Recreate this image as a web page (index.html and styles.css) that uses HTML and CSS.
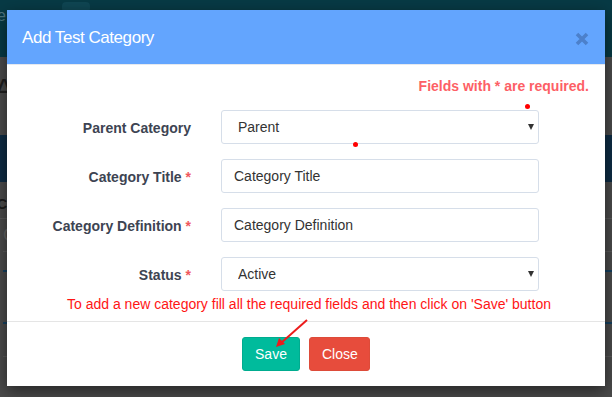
FILE: index.html
```html
<!DOCTYPE html>
<html lang="en">
<head>
  <meta charset="UTF-8">
  <title>Add Test Category</title>
  <link rel="stylesheet" href="styles.css">
</head>
<body>
  <div class="page">
    <header class="topbar">
      <span class="brand">e</span>
      <span class="top-pill"></span>
    </header>
    <div class="page-body">
      <h1 class="page-title">A</h1>
      <div class="navy-band"></div>
      <div class="list-head">Ca</div>
      <div class="list-row">C</div>
      <div class="list-row blue"></div>
      <div class="list-row tall blue"></div>
      <div class="list-row"></div>
    </div>
  </div>

  <div class="modal">
    <div class="modal-header">
      <h4 class="modal-title">Add Test Category</h4>
      <svg class="close-icon" width="14" height="14" viewBox="0 0 14 14">
        <path d="M2 2 L12 12 M12 2 L2 12" stroke="#4c80cb" stroke-width="3.6" stroke-linecap="butt"/>
      </svg>
    </div>

    <div class="modal-body">
      <p class="required-note">Fields with * are required.</p>

      <form class="form-grid">
        <label class="form-label">Parent Category</label>
        <div class="select-wrap">
          <select class="form-control select">
            <option>Parent</option>
          </select>
        </div>

        <label class="form-label">Category Title <span class="star">*</span></label>
        <input class="form-control" type="text" value="Category Title">

        <label class="form-label">Category Definition <span class="star">*</span></label>
        <input class="form-control" type="text" value="Category Definition">

        <label class="form-label">Status <span class="star">*</span></label>
        <div class="select-wrap">
          <select class="form-control select">
            <option>Active</option>
          </select>
        </div>
      </form>

      <p class="help-note">To add a new category fill all the required fields and then click on 'Save' button</p>
    </div>

    <div class="modal-footer">
      <button class="btn btn-save">Save</button>
      <button class="btn btn-close">Close</button>
    </div>

    <!-- annotation marks -->
    <span class="dot dot-1"></span>
    <span class="dot dot-2"></span>
    <svg class="arrow" width="40" height="34" viewBox="0 0 40 34">
      <line x1="37" y1="1" x2="11" y2="24" stroke="#ec1c1c" stroke-width="2"/>
      <polygon points="6,28 9,19 15,25" fill="#ec1c1c"/>
    </svg>
  </div>
</body>
</html>
```

FILE: styles.css
```css
* {
  box-sizing: border-box;
  margin: 0;
  padding: 0;
}

body {
  font-family: "Liberation Sans", Arial, sans-serif;
  font-size: 14px;
  line-height: 20px;
  background: #4b4b4b;
  width: 612px;
  height: 397px;
  overflow: hidden;
  position: relative;
}

/* page behind the dialog (already dimmed) */
.topbar {
  height: 57px;
  background: #073a45;
  position: relative;
}

.brand {
  position: absolute;
  left: -3px;
  top: 6px;
  font-size: 16px;
  color: #4e7580;
}

.top-pill {
  position: absolute;
  left: 62px;
  top: 2px;
  width: 28px;
  height: 10px;
  border-radius: 4px;
  background: #0f4653;
}

.page-body {
  background: #4b4b4b;
}

.page-title {
  font-size: 30px;
  font-weight: normal;
  color: #1f1f1f;
  height: 78px;
  padding-top: 22px;
  margin-left: -6px;
}

.navy-band {
  height: 47px;
  background: #0e2c44;
}

.list-head {
  height: 37px;
  padding-top: 12px;
  font-weight: bold;
  color: #1a1a1a;
  margin-left: -3px;
  border-bottom: 1px solid #5a5a5a;
}

.list-row {
  height: 33px;
  padding-top: 6px;
  font-size: 18px;
  color: #636363;
  margin-left: 3px;
  border-bottom: 1px solid #5a5a5a;
}

.list-row.blue {
  height: 20px;
  border-bottom: 2px solid #15405f;
}

.list-row.tall {
  height: 52px;
}

/* dialog */
.modal {
  position: absolute;
  left: 7px;
  top: 10px;
  width: 598px;
  background: #fff;
  box-shadow: 0 5px 15px rgba(0, 0, 0, 0.5);
}

.modal-header {
  height: 55px;
  background: #63a5fe;
  border-bottom: 1px solid #e5e9ef;
  padding: 15px;
  display: flex;
  justify-content: space-between;
  align-items: flex-start;
}

.modal-title {
  font-size: 17px;
  letter-spacing: -0.45px;
  font-weight: normal;
  line-height: 25.7px;
  color: #fff;
}

.close-icon {
  margin-top: 7px;
  margin-right: 1px;
}

.modal-body {
  padding: 11px 15px 7px;
}

.required-note {
  text-align: right;
  font-weight: bold;
  color: #fd5f66;
  padding-right: 1px;
  margin-bottom: 14px;
}

.form-grid {
  display: grid;
  grid-template-columns: 169px 318px;
  column-gap: 30px;
  row-gap: 15px;
}

.form-label {
  text-align: right;
  font-weight: bold;
  color: #3d4452;
  padding-top: 8px;
  white-space: nowrap;
}

.star {
  color: #f0585d;
}

.form-control {
  width: 318px;
  height: 34px;
  border: 1px solid #d6dee9;
  border-radius: 3px;
  background: #fff;
  padding: 0 12px;
  font-family: inherit;
  font-size: 14px;
  color: #333;
  outline: none;
}

.select-wrap {
  position: relative;
}

.select {
  appearance: none;
  -webkit-appearance: none;
  padding-left: 16px;
}

.select-wrap::after {
  content: "";
  position: absolute;
  right: 5px;
  top: 14px;
  border-left: 3.5px solid transparent;
  border-right: 3.5px solid transparent;
  border-top: 6px solid #333;
  pointer-events: none;
}

.help-note {
  margin-top: 3px;
  text-align: center;
  color: #ff1515;
  padding-left: 6px;
}

.modal-footer {
  border-top: 1px solid #e5e5e5;
  padding: 15px;
  display: flex;
  justify-content: center;
  gap: 9px;
}

.btn {
  height: 34px;
  border: 1px solid transparent;
  border-radius: 3px;
  padding: 0 12px;
  font-family: inherit;
  font-size: 14px;
  color: #fff;
}

.btn-save {
  width: 58px;
  background: #00bb9c;
  border-color: #00ac8f;
}

.btn-close {
  width: 61px;
  background: #e74c3c;
  border-color: #dd4b39;
}

.dot {
  position: absolute;
  width: 5px;
  height: 5px;
  border-radius: 50%;
  background: #f00;
}

.dot-1 {
  left: 518px;
  top: 94px;
}

.dot-2 {
  left: 346px;
  top: 132px;
}

.arrow {
  position: absolute;
  left: 263px;
  top: 309px;
}
```
